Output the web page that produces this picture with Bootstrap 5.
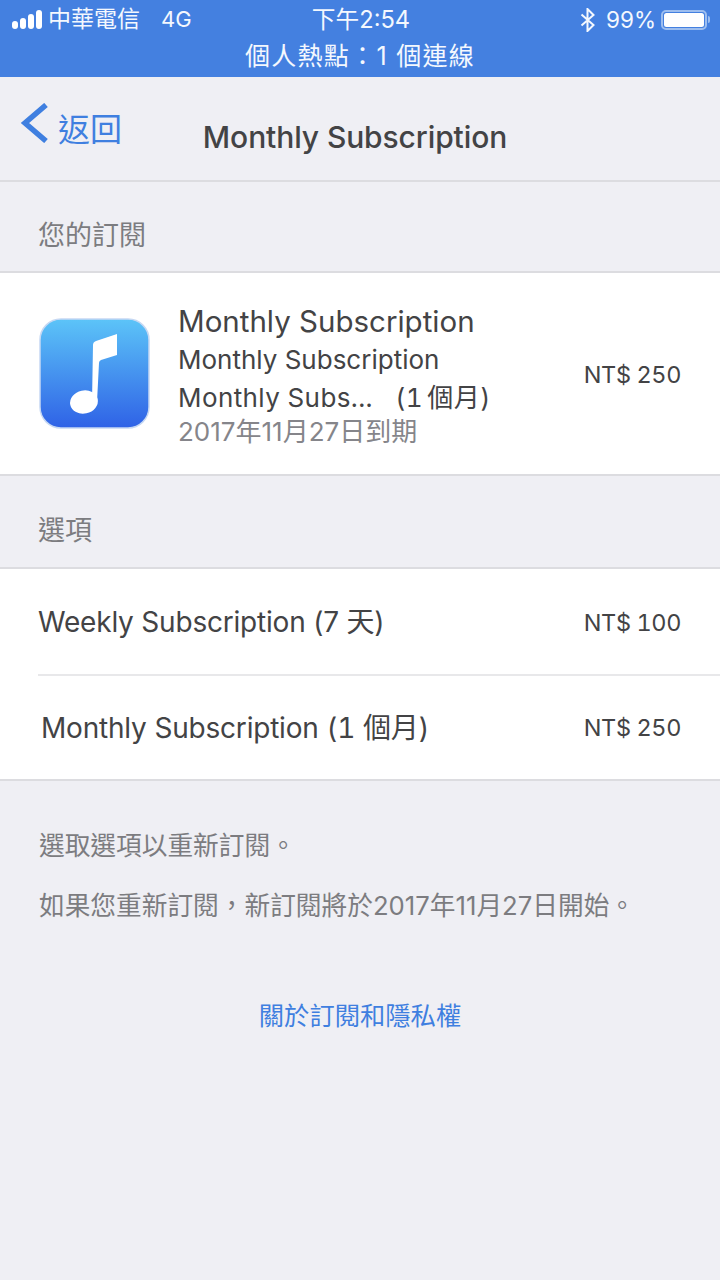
<!DOCTYPE html>
<html lang="zh-Hant">
<head>
  <meta charset="UTF-8" />
  <title>Monthly Subscription</title>
  <link href="https://cdn.jsdelivr.net/npm/bootstrap@5.3.3/dist/css/bootstrap.min.css" rel="stylesheet" />
  <style>
    html, body { height: 100%; }
    body {
      background: #efeff4;
      color: #434345;
      font-family: Inter, "Noto Sans CJK TC", sans-serif;
      overflow: hidden;
    }
    .status-area { background: #4480e0; color: #f4f8fe; height: 77px; }
    .status-top { height: 39px; padding: 0 10px 0 12px; font-size: 23px; }
    .status-side { width: 280px; }
    .status-clock { font-size: 23.7px; }
    .carrier-name { margin-left: 6px; }
    .carrier-net { margin-left: 21px; font-size: 22px; }
    .hotspot-line { font-size: 25px; line-height: 35px; letter-spacing: 1.3px; }
    .signal-bars { height: 19px; gap: 2px; }
    .signal-bars i { display: block; width: 6px; background: #fff; border-radius: 3px; }
    .bt-mark { margin-right: 11px; }
    .batt-level { font-size: 22.5px; margin-right: 5px; }
    .batt-shell { width: 46px; height: 20px; border: 2px solid #9dbeef; border-radius: 5px; padding: 1px; }
    .batt-fill { height: 100%; background: #fff; border-radius: 2.5px; }
    .batt-tip { width: 2px; height: 7px; background: #9dbeef; border-radius: 0 2px 2px 0; margin-left: 1px; }

    .top-nav { height: 105px; border-bottom: 2px solid #dcdce0; }
    .back-link { color: #3f7fe0; font-size: 32px; left: 20px; top: 26px; text-decoration: none; gap: 9px; line-height: 44px; }
    .back-text { margin-top: 5px; }
    .nav-heading { font-size: 30px; font-weight: 500; letter-spacing: -.1px; padding: 38px 10px 0 0; color: #434345; margin: 0; line-height: 44px; }

    .group-label { color: #7c7c80; font-size: 27px; padding-left: 38px; }
    .label-one { height: 89px; padding-top: 32px; line-height: 44px; }
    .label-two { height: 91px; padding-top: 33px; line-height: 44px; }
    .white-block { background: #fff; border-top: 2px solid #dcdce0; border-bottom: 2px solid #dcdce0; }

    .sub-block { height: 205px; padding: 0 39px; }
    .app-tile { width: 111px; height: 111px; flex-shrink: 0; margin-right: 29px; }
    .sub-lines { margin-left: -1px; }
    .sub-title { font-size: 29.5px; line-height: 40px; }
    .sub-line { font-size: 26px; line-height: 38px; }
    .sub-line-wide { letter-spacing: .4px; font-variant-numeric: tabular-nums; }
    .month-note { word-spacing: -3px; }
    .sub-date { font-size: 26px; line-height: 30px; color: #85858a; }
    .price { font-size: 23.5px; color: #434345; letter-spacing: -.4px; font-variant-numeric: tabular-nums; }
    .sub-price { margin-top: 3px; }

    .option-row { height: 105px; font-size: 28px; padding-right: 39px; letter-spacing: -.2px; }
    .option-list { padding-left: 38px; }
    .option-row + .option-row { border-top: 2px solid #e8e8ea; }
    .option-price { margin-top: 3px; }
    .nudge { padding-left: 3px; word-spacing: .5px; font-variant-numeric: tabular-nums; }

    .foot-note { color: #7c7c80; font-size: 25.7px; padding: 0 39px; line-height: 34px; }
    .note-one { margin-top: 48px; }
    .note-two { margin-top: 26px; }
    .about-link { color: #3f7fe0; font-size: 25.3px; margin-top: 71px; display: block; text-decoration: none; line-height: 44px; }
  </style>
</head>
<body>
  <div class="status-area">
    <div class="status-top d-flex align-items-center justify-content-between">
      <div class="status-side d-flex align-items-center">
        <span class="signal-bars d-flex align-items-end">
          <i style="height:8px"></i><i style="height:11px"></i><i style="height:15px"></i><i style="height:19px"></i>
        </span>
        <span class="carrier-name">中華電信</span>
        <span class="carrier-net">4G</span>
      </div>
      <div class="status-clock">下午2:54</div>
      <div class="status-side d-flex align-items-center justify-content-end">
        <svg class="bt-mark" width="15" height="24" viewBox="0 0 15 24" fill="none" stroke="#f4f8fe" stroke-width="2">
          <path d="M1.5 6.5l12 10.5-6 6V1l6 6-12 10.5" />
        </svg>
        <span class="batt-level">99%</span>
        <span class="batt-shell d-block"><span class="batt-fill d-block"></span></span>
        <span class="batt-tip d-block"></span>
      </div>
    </div>
    <div class="hotspot-line text-center">個人熱點：1 個連線</div>
  </div>

  <div class="top-nav position-relative">
    <a class="back-link position-absolute d-flex align-items-start" href="#">
      <svg width="29" height="40" viewBox="0 0 29 40" fill="none" stroke="#3f7fe0" stroke-width="5.5">
        <path d="M26 2 L5 20 L26 38" />
      </svg>
      <span class="back-text">返回</span>
    </a>
    <h1 class="nav-heading text-center">Monthly Subscription</h1>
  </div>

  <div class="group-label label-one">您的訂閱</div>
  <div class="white-block sub-block d-flex align-items-center">
    <svg class="app-tile" viewBox="0 0 111 111">
      <defs>
        <linearGradient id="tileGrad" x1="0" y1="0" x2="0" y2="1">
          <stop offset="0" stop-color="#5cc4f8" />
          <stop offset="1" stop-color="#2f62e6" />
        </linearGradient>
      </defs>
      <rect x="1" y="1" width="109" height="109" rx="21" fill="url(#tileGrad)" stroke="#c6d8f3" stroke-width="1.5" />
      <ellipse cx="45" cy="84" rx="14" ry="11.5" fill="#fff" transform="rotate(-12 45 84)" />
      <path fill="#fff" d="M54 27 Q54 24 57 23 L78 16 V37 L62 42 Q60 43 60 45 L58 84 H53 Z" />
    </svg>
    <div class="sub-lines flex-grow-1">
      <div class="sub-title">Monthly Subscription</div>
      <div class="sub-line">Monthly Subscription</div>
      <div class="sub-line sub-line-wide">Monthly Subs...&nbsp;&nbsp;&nbsp;<span class="month-note">(1 個月)</span></div>
      <div class="sub-date">2017年11月27日到期</div>
    </div>
    <div class="price sub-price">NT$ 250</div>
  </div>

  <div class="group-label label-two">選項</div>
  <div class="white-block option-list">
    <div class="option-row d-flex align-items-center justify-content-between">
      <span>Weekly Subscription (7 天)</span>
      <span class="price option-price">NT$ 100</span>
    </div>
    <div class="option-row d-flex align-items-center justify-content-between">
      <span class="nudge">Monthly Subscription (1 個月)</span>
      <span class="price">NT$ 250</span>
    </div>
  </div>

  <div class="foot-note note-one">選取選項以重新訂閱。</div>
  <div class="foot-note note-two">如果您重新訂閱，新訂閱將於2017年11月27日開始。</div>
  <a class="about-link text-center" href="#">關於訂閱和隱私權</a>
</body>
</html>
